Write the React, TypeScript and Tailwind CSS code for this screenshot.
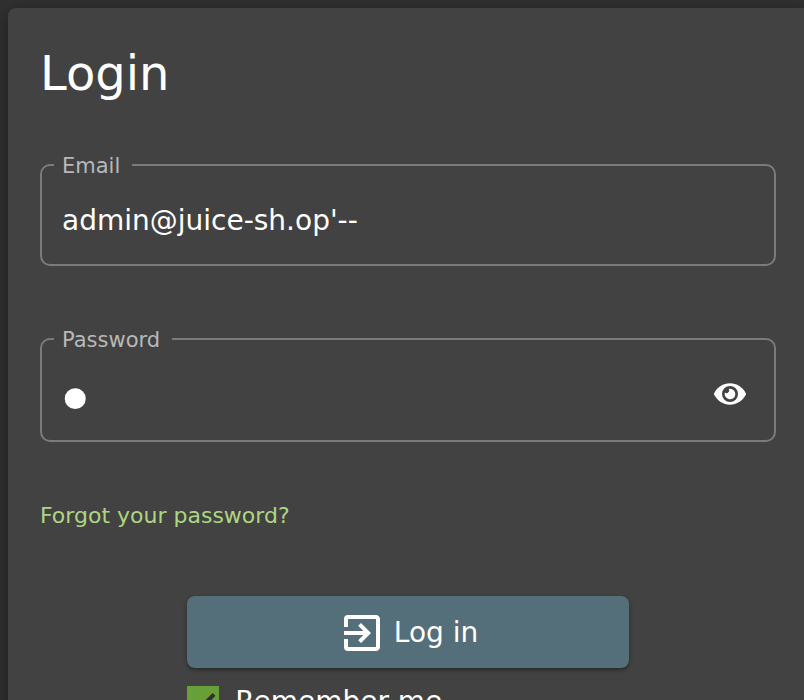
import { useState } from "react";
import { FaEye } from "react-icons/fa";
import { MdExitToApp } from "react-icons/md";

const fieldset = "min-w-0 rounded-[10px] border-2 border-[#7b7b7b] pl-3 pr-5";
const legend = "pl-2 pr-3 pt-0.5 text-[21px] leading-6 text-[#b8b8b8]";

export default function App() {
  const [email, setEmail] = useState("admin@juice-sh.op'--");
  const [password, setPassword] = useState("a");
  const [visible, setVisible] = useState(false);
  const [remember, setRemember] = useState(true);

  return (
    <main className="h-screen overflow-hidden bg-[#303030] pl-2 pt-2 font-['DejaVu_Sans',sans-serif] text-white">
      <form
        className="min-h-full rounded-l-lg bg-[#424242] pl-8 pr-7 pt-8 shadow-[0_4px_16px_rgba(0,0,0,0.4)]"
        onSubmit={(e) => e.preventDefault()}
      >
        <h1 className="text-5xl leading-[66px]">Login</h1>

        <fieldset className={`mt-[46px] ${fieldset}`}>
          <legend className={legend}>
            <label htmlFor="email">Email</label>
          </legend>
          <input
            id="email"
            type="text"
            value={email}
            onChange={(e) => setEmail(e.target.value)}
            className="mb-5 mt-[18px] block h-12 w-full bg-transparent pl-2 text-[28px] outline-none"
          />
        </fieldset>

        <fieldset className={`mt-[60px] ${fieldset}`}>
          <legend className={legend}>
            <label htmlFor="password">Password</label>
          </legend>
          <div className="mb-5 mt-4 flex h-13 items-center">
            <input
              id="password"
              type={visible ? "text" : "password"}
              value={password}
              onChange={(e) => setPassword(e.target.value)}
              className={`h-13 min-w-0 flex-1 bg-transparent outline-none ${visible ? "pl-2 text-[28px]" : "pt-3 text-7xl"}`}
            />
            <button
              type="button"
              aria-label="Display password"
              onClick={() => setVisible(!visible)}
              className="flex size-12 items-center justify-center"
            >
              <FaEye size={32} />
            </button>
          </div>
        </fieldset>

        <a href="#/forgot-password" className="mt-[58px] block w-fit text-[22px] leading-8 text-[#aed581]">
          Forgot your password?
        </a>

        <div className="mx-auto mt-16 w-3/5">
          <button
            type="submit"
            className="flex h-18 w-full items-center justify-center gap-2 rounded-lg bg-[#546e7a] pt-0.5 text-[28px] shadow-[0_2px_4px_rgba(0,0,0,0.4)]"
          >
            <MdExitToApp size={48} />
            Log in
          </button>
          <label htmlFor="remember" className="mt-4 flex items-center gap-4 text-[28px] leading-9">
            <span className="relative block size-8">
              <input
                id="remember"
                type="checkbox"
                checked={remember}
                onChange={(e) => setRemember(e.target.checked)}
                className="block size-8 appearance-none border-4 border-[#9e9e9e] checked:border-[#689f38] checked:bg-[#689f38]"
              />
              <svg
                viewBox="0 0 24 24"
                className="pointer-events-none absolute inset-0 size-8 fill-none stroke-[#303030] stroke-3"
              >
                <path d="M4.1 12.7 9 17.6 20.3 6.3" />
              </svg>
            </span>
            Remember me
          </label>
        </div>
      </form>
    </main>
  );
}
